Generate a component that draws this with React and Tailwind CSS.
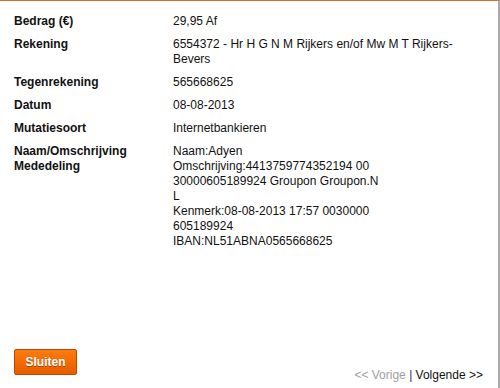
export default function App() {
  const rows = [
    { label: ["Bedrag (€)"], value: ["29,95 Af"] },
    { label: ["Rekening"], value: ["6554372 - Hr H G N M Rijkers en/of Mw M T Rijkers-Bevers"] },
    { label: ["Tegenrekening"], value: ["565668625"] },
    { label: ["Datum"], value: ["08-08-2013"] },
    { label: ["Mutatiesoort"], value: ["Internetbankieren"] },
    {
      label: ["Naam/Omschrijving", "Mededeling"],
      value: [
        "Naam:Adyen",
        "Omschrijving:4413759774352194 00",
        "30000605189924 Groupon Groupon.N",
        "L",
        "Kenmerk:08-08-2013 17:57 0030000",
        "605189924",
        "IBAN:NL51ABNA0565668625",
      ],
    },
  ];
  return (
    <div
      className="w-[500px] h-[388px] bg-white border-t border-t-[#d2702c] border-r-2 border-r-[#a8a8a8] flex flex-col text-[12px] leading-[15px] text-[#111]"
      style={{ fontFamily: '"Liberation Sans", Arial, sans-serif' }}
    >
      <div className="flex flex-col pt-[13px] pl-[14px]">
        {rows.map((r, i) => (
          <div key={i} className="flex pb-[8px]">
            <div className="w-[159px] font-bold text-[#111]">
              {r.label.map((l, j) => (
                <div key={j}>{l}</div>
              ))}
            </div>
            <div className="w-[300px]">
              {r.value.map((v, j) => (
                <div key={j}>{v}</div>
              ))}
            </div>
          </div>
        ))}
      </div>
      <div className="flex-1" />
      <div className="flex items-end justify-between pl-[14px] pr-[15px] pb-[5px]">
        <button
          className="mb-[8px] w-[63px] h-[26px] rounded-[2px] border border-[#b94a00] bg-gradient-to-b from-[#ff7a10] to-[#e65c00] text-white font-bold text-[12px] [text-shadow:0_1px_0_rgba(120,40,0,0.6)]"
        >
          Sluiten
        </button>
        <div className="text-[12px] leading-[15px]">
          <span className="text-[#a0a0a0]">&lt;&lt; Vorige</span>
          <span className="text-[#3a2a6a]"> | </span>
          <span className="text-[#111]">Volgende &gt;&gt;</span>
        </div>
      </div>
    </div>
  );
}
